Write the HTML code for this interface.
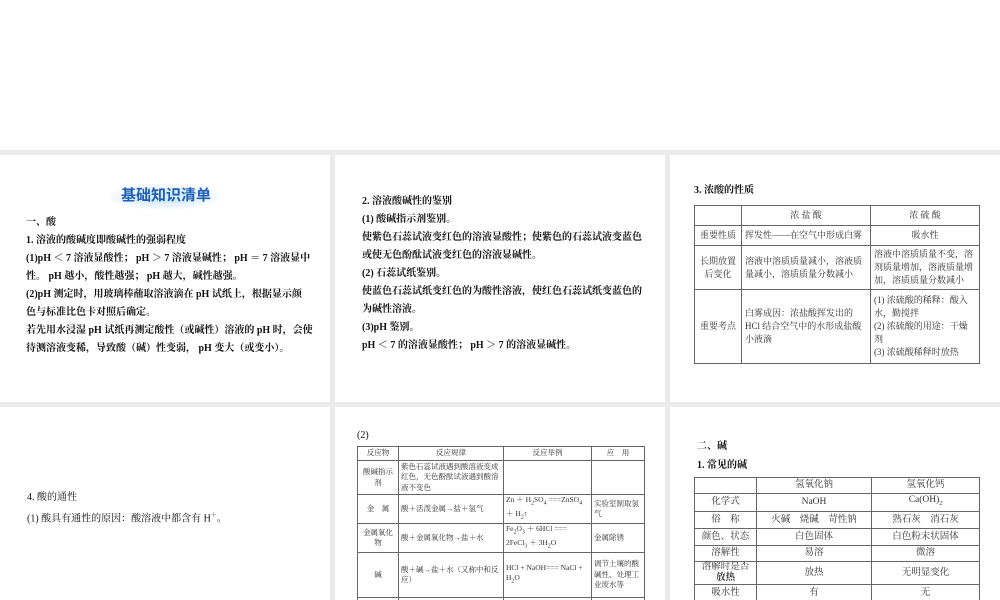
<!DOCTYPE html>
<html style="width:1000px;height:600px;overflow:hidden"><head><meta charset="utf-8"><style>
*{margin:0;padding:0;box-sizing:border-box}
body{width:1000px;height:600px;background:#fff;position:relative;overflow:hidden;font-family:"Liberation Serif","Noto Serif CJK SC","Noto Sans CJK SC",serif;color:#111}
.g{position:absolute;background:#ebebeb}
.t{position:absolute;font-size:10px;line-height:18px;white-space:nowrap}
table{position:absolute;border-collapse:collapse;font-size:9px;color:#333;table-layout:fixed}
td{border:1px solid #666;text-align:center;vertical-align:middle;line-height:13px;padding:0 3px;overflow:hidden}
td.l{text-align:left}
sub{font-size:6px}
.s td{line-height:10.5px;padding:0 2px;font-size:7.5px}
</style></head><body>
<div class="g" style="left:0;top:150px;width:1000px;height:5px"></div>
<div class="g" style="left:0;top:402px;width:1000px;height:5px"></div>
<div class="g" style="left:330px;top:150px;width:5px;height:450px"></div>
<div class="g" style="left:665px;top:150px;width:5px;height:450px"></div>

<!-- panel 1 -->
<div style="position:absolute;left:108px;top:184px;width:112px;height:26px;border-radius:50%;background:radial-gradient(ellipse,#d8ecf8 30%,#fff 75%)"></div>
<div class="t" style="left:121px;top:185px;font-size:15px;font-weight:bold;color:#1d5fb8;font-family:'Noto Sans CJK SC',sans-serif;line-height:20px">基础知识清单</div>
<div class="t" style="left:26px;top:214px;font-weight:bold">一、酸</div>
<div class="t" style="left:26px;top:232px;font-weight:bold">1. 溶液的酸碱度即酸碱性的强弱程度<br>(1)pH ＜ 7 溶液显酸性； pH ＞ 7 溶液显碱性； pH ＝ 7 溶液显中<br>性。 pH 越小，酸性越强； pH 越大，碱性越强。<br>(2)pH 测定时，用玻璃棒蘸取溶液滴在 pH 试纸上，根据显示颜<br>色与标准比色卡对照后确定。<br>若先用水浸湿 pH 试纸再测定酸性（或碱性）溶液的 pH 时，会使<br>待测溶液变稀，导致酸（碱）性变弱， pH 变大（或变小）。</div>

<!-- panel 2 -->
<div class="t" style="left:362px;top:193px;font-weight:bold">2. 溶液酸碱性的鉴别<br>(1) 酸碱指示剂鉴别。<br>使紫色石蕊试液变红色的溶液显酸性；使紫色的石蕊试液变蓝色<br>或使无色酚酞试液变红色的溶液显碱性。<br>(2) 石蕊试纸鉴别。<br>使蓝色石蕊试纸变红色的为酸性溶液，使红色石蕊试纸变蓝色的<br>为碱性溶液。<br>(3)pH 鉴别。<br>pH ＜ 7 的溶液显酸性； pH ＞ 7 的溶液显碱性。</div>

<!-- panel 3 -->
<div class="t" style="left:694px;top:182px;font-weight:bold">3. 浓酸的性质</div>
<table style="left:694px;top:205px;width:285px">
<col style="width:47px"><col style="width:129px"><col style="width:109px">
<tr style="height:20px"><td>&nbsp;</td><td>浓 盐 酸</td><td>浓 硫 酸</td></tr>
<tr style="height:20px"><td>重要性质</td><td class="l">挥发性——在空气中形成白雾</td><td>吸水性</td></tr>
<tr style="height:44px"><td>长期放置后变化</td><td class="l">溶液中溶质质量减小，溶液质量减小，溶质质量分数减小</td><td class="l">溶液中溶质质量不变，溶剂质量增加，溶液质量增加，溶质质量分数减小</td></tr>
<tr style="height:74px"><td>重要考点</td><td class="l">白雾成因：浓盐酸挥发出的HCl 结合空气中的水形成盐酸小液滴</td><td class="l">(1) 浓硫酸的稀释：酸入水，勤搅拌<br>(2) 浓硫酸的用途：干燥剂<br>(3) 浓硫酸稀释时放热</td></tr>
</table>

<!-- panel 4 -->
<div class="t" style="left:27px;top:489px">4. 酸的通性<br>(1) 酸具有通性的原因：酸溶液中都含有 H<sup style="font-size:6px">＋</sup>。</div>

<!-- panel 5 -->
<div class="t" style="left:357px;top:427px">(2)</div>
<table class="s" style="left:357px;top:446px;width:287px">
<col style="width:41px"><col style="width:105px"><col style="width:88px"><col style="width:53px">
<tr style="height:14px"><td>反应物</td><td>反应规律</td><td>反应举例</td><td>应　用</td></tr>
<tr style="height:34px"><td>酸碱指示剂</td><td class="l">紫色石蕊试液遇到酸溶液变成红色，无色酚酞试液遇到酸溶液不变色</td><td></td><td></td></tr>
<tr style="height:27px"><td>金　属</td><td class="l">酸＋活泼金属→盐＋氢气</td><td class="l">Zn ＋ H<sub>2</sub>SO<sub>4</sub> ===ZnSO<sub>4</sub> ＋ H<sub>2</sub>↑</td><td class="l">实验室制取氢气</td></tr>
<tr style="height:29px"><td>金属氧化物</td><td class="l">酸＋金属氧化物→盐＋水</td><td class="l">Fe<sub>2</sub>O<sub>3</sub> ＋ 6HCl === 2FeCl<sub>3</sub> ＋ 3H<sub>2</sub>O</td><td class="l">金属除锈</td></tr>
<tr style="height:45px"><td>碱</td><td class="l">酸＋碱→盐＋水（又称中和反应）</td><td class="l">HCl + NaOH=== NaCl + H<sub>2</sub>O</td><td class="l">调节土壤的酸碱性、处理工业废水等</td></tr>
<tr style="height:20px"><td></td><td></td><td></td><td></td></tr>
</table>

<!-- panel 6 -->
<div class="t" style="left:697px;top:438px;font-weight:bold">二、碱</div>
<div class="t" style="left:697px;top:457px;font-weight:bold">1. 常见的碱</div>
<table style="left:694px;top:477px;width:285px;font-size:9.5px">
<col style="width:62px"><col style="width:115px"><col style="width:108px">
<tr style="height:16px"><td></td><td>氢氧化钠</td><td>氢氧化钙</td></tr>
<tr style="height:18px"><td>化学式</td><td>NaOH</td><td>Ca(OH)<sub>2</sub></td></tr>
<tr style="height:17px"><td>俗　称</td><td>火碱　烧碱　苛性钠</td><td>熟石灰　消石灰</td></tr>
<tr style="height:17px"><td>颜色、状态</td><td>白色固体</td><td>白色粉末状固体</td></tr>
<tr style="height:16px"><td>溶解性</td><td>易溶</td><td>微溶</td></tr>
<tr style="height:23px"><td style="line-height:11px">溶解时是否<b>放热</b></td><td>放热</td><td>无明显变化</td></tr>
<tr style="height:17px"><td>吸水性</td><td>有</td><td>无</td></tr>
</table>
</body></html>
